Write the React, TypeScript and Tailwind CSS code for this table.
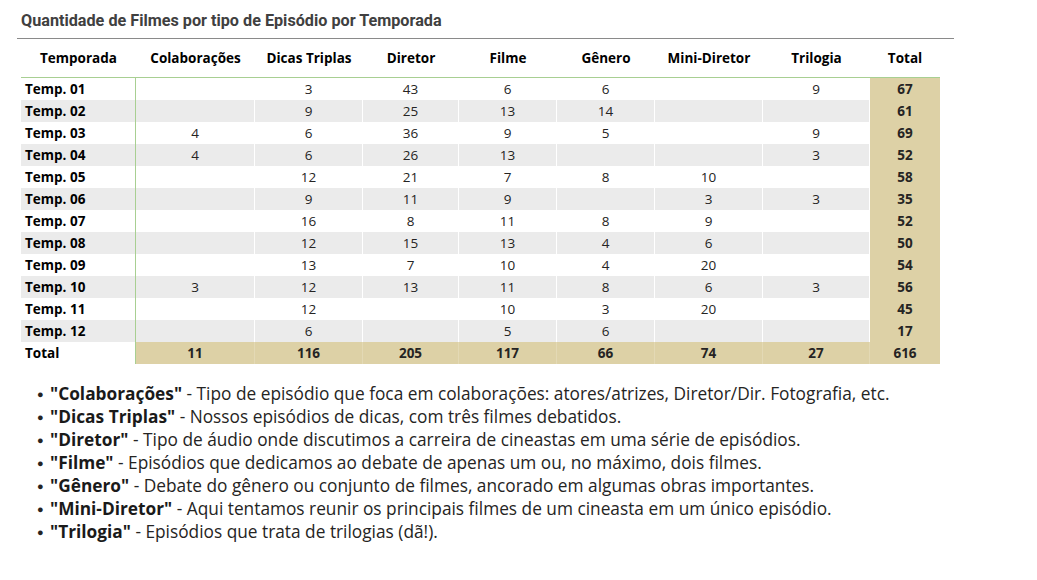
import React from "react";

const cols = ["Colaborações", "Dicas Triplas", "Diretor", "Filme", "Gênero", "Mini-Diretor", "Trilogia"];

const rows: { label: string; v: (number | null)[]; total: number }[] = [
  { label: "Temp. 01", v: [null, 3, 43, 6, 6, null, 9], total: 67 },
  { label: "Temp. 02", v: [null, 9, 25, 13, 14, null, null], total: 61 },
  { label: "Temp. 03", v: [4, 6, 36, 9, 5, null, 9], total: 69 },
  { label: "Temp. 04", v: [4, 6, 26, 13, null, null, 3], total: 52 },
  { label: "Temp. 05", v: [null, 12, 21, 7, 8, 10, null], total: 58 },
  { label: "Temp. 06", v: [null, 9, 11, 9, null, 3, 3], total: 35 },
  { label: "Temp. 07", v: [null, 16, 8, 11, 8, 9, null], total: 52 },
  { label: "Temp. 08", v: [null, 12, 15, 13, 4, 6, null], total: 50 },
  { label: "Temp. 09", v: [null, 13, 7, 10, 4, 20, null], total: 54 },
  { label: "Temp. 10", v: [3, 12, 13, 11, 8, 6, 3], total: 56 },
  { label: "Temp. 11", v: [null, 12, null, 10, 3, 20, null], total: 45 },
  { label: "Temp. 12", v: [null, 6, null, 5, 6, null, null], total: 17 },
];

const totals = [11, 116, 205, 117, 66, 74, 27];

const notes: [string, string][] = [
  ["\"Colaborações\"", " - Tipo de episódio que foca em colaborações: atores/atrizes, Diretor/Dir. Fotografia, etc."],
  ["\"Dicas Triplas\"", " - Nossos episódios de dicas, com três filmes debatidos."],
  ["\"Diretor\"", " - Tipo de áudio onde discutimos a carreira de cineastas em uma série de episódios."],
  ["\"Filme\"", " - Episódios que dedicamos ao debate de apenas um ou, no máximo, dois filmes."],
  ["\"Gênero\"", " - Debate do gênero ou conjunto de filmes, ancorado em algumas obras importantes."],
  ["\"Mini-Diretor\"", " - Aqui tentamos reunir os principais filmes de um cineasta em um único episódio."],
  ["\"Trilogia\"", " - Episódios que trata de trilogias (dã!)."],
];

const grid = "grid grid-cols-[115px_119px_108px_96px_98px_98px_108px_107px_70px]";

export default function App() {
  return (
    <div className="w-[1037px] h-[580px] bg-white relative overflow-hidden" style={{ fontFamily: '"Open Sans", "Noto Sans", sans-serif' }}>
      <div className="pl-[21px] pt-[10px] h-[38px] text-[16.2px] font-bold text-[#404040] leading-[21px]" style={{ fontFamily: 'Roboto, "Liberation Sans", sans-serif' }}>
        Quantidade de Filmes por tipo de Episódio por Temporada
      </div>
      <div className="ml-[17px] w-[937px] h-px bg-[#8a8a8a]" />
      <div className="ml-[21px] w-[919px] text-[13.5px] text-[#252423]">
        <div className={`${grid} h-[39px] items-center font-bold text-black border-b border-[#a8cf92]`}>
          <div className="text-center">Temporada</div>
          {cols.map((c) => (
            <div key={c} className="text-center">{c}</div>
          ))}
          <div className="text-center">Total</div>
        </div>
        {rows.map((r, i) => {
          const alt = i % 2 === 1;
          return (
            <div key={r.label} className={`${grid} h-[22px] leading-[22px]`}>
              <div className={`pl-[4px] font-bold text-black border-r border-[#a8cf92] ${alt ? "bg-[#ebebeb]" : "bg-white"}`}>{r.label}</div>
              {r.v.map((n, j) => (
                <div key={j} className={`text-center border-r border-white ${alt ? "bg-[#ebebeb]" : "bg-white"}`}>
                  {n ?? ""}
                </div>
              ))}
              <div className="text-center font-bold bg-[#ddd1a6] border-b border-[#e6dcbc]">{r.total}</div>
            </div>
          );
        })}
        <div className={`${grid} h-[22px] leading-[22px] font-bold`}>
          <div className="pl-[4px] text-black border-r border-[#a8cf92] bg-white">Total</div>
          {totals.map((n, j) => (
            <div key={j} className="text-center bg-[#ddd1a6] border-r border-[#e3d9b5]">{n}</div>
          ))}
          <div className="text-center bg-[#ddd1a6]">616</div>
        </div>
      </div>
      <ul className="mt-[18px] pl-[37px] text-[17.3px] text-[#252423]">
        {notes.map(([b, t]) => (
          <li key={b} className="flex items-center h-[23px] leading-[23px]">
            <span className="w-[13px] text-[11px] leading-[23px] text-[#252423]">●</span>
            <span className="leading-[23px]">
              <b className="text-[#1a1a1a]">{b}</b>
              {t}
            </span>
          </li>
        ))}
      </ul>
    </div>
  );
}
